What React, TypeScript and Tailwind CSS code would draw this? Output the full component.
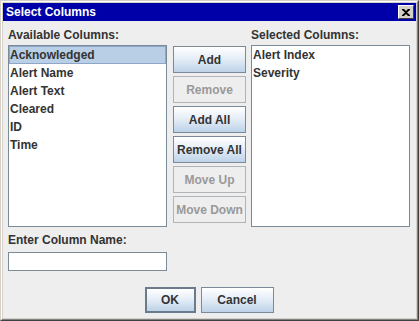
import React from "react";

function JButton({
  label,
  disabled,
  width,
  height,
  isDefault,
}: {
  label: string;
  disabled?: boolean;
  width: string;
  height: string;
  isDefault?: boolean;
}) {
  if (disabled) {
    return (
      <div
        className={`${width} ${height} flex items-center justify-center border border-[#b0b4b9] bg-[#eeeeee] text-[#999999] text-[12px] font-bold`}
      >
        {label}
      </div>
    );
  }
  return (
    <div
      className={`${width} ${height} flex items-center justify-center ${
        isDefault ? "border-2 border-[#6b7b8c]" : "border border-[#7a8a99]"
      } bg-gradient-to-b from-[#ffffff] via-[#e3ecf6] to-[#bdd2e8] text-[#333333] text-[12px] font-bold`}
    >
      {label}
    </div>
  );
}

function ListBox({ items, selected }: { items: string[]; selected?: number }) {
  return (
    <div className="h-[182px] w-[159px] border border-[#7a8a99] bg-white">
      {items.map((it, i) => (
        <div
          key={it}
          className={`h-[18px] leading-[16px] text-[12px] font-bold text-[#333333] ${
            i === selected
              ? "bg-[#b8cfe5] border border-[#8ea7c8] pl-0"
              : "border border-transparent pl-0"
          }`}
        >
          {it}
        </div>
      ))}
    </div>
  );
}

export default function App() {
  return (
    <div className="w-[419px] h-[321px] font-['Liberation_Sans',Arial,sans-serif] border border-t-[#d4d0c8] border-l-[#d4d0c8] border-r-[#404040] border-b-[#404040]">
      <div className="w-full h-full border border-t-white border-l-white border-r-[#808080] border-b-[#808080]">
        <div className="w-full h-full border border-[#d4d0c8] flex flex-col">
          {/* Title bar */}
          <div className="h-[18px] bg-[#0000a8] flex items-center justify-between pl-[3px] pr-[2px]">
            <span className="text-white text-[12px] font-bold leading-[18px]">
              Select Columns
            </span>
            <div className="w-[16px] h-[14px] bg-[#d4d0c8] border border-t-white border-l-white border-r-[#404040] border-b-[#404040] flex items-center justify-center">
              <svg width="8" height="7" viewBox="0 0 8 7">
                <path
                  d="M0 0h2l2 2 2-2h2v1L5 3.5 8 6v1H6L4 5 2 7H0V6l3-2.5L0 1z"
                  fill="#000"
                />
              </svg>
            </div>
          </div>
          {/* Content */}
          <div className="flex-1 bg-[#eeeeee] pt-[7px] pl-[5px] pr-[6px] flex flex-col">
            <div className="flex">
              <div className="w-[159px] flex flex-col">
                <div className="h-[15px] leading-[15px] text-[12px] font-bold text-[#333333]">
                  Available Columns:
                </div>
                <div className="mt-[2px]">
                  <ListBox
                    items={[
                      "Acknowledged",
                      "Alert Name",
                      "Alert Text",
                      "Cleared",
                      "ID",
                      "Time",
                    ]}
                    selected={0}
                  />
                </div>
              </div>
              <div className="ml-[6px] w-[73px] pt-[18px] flex flex-col gap-[3px]">
                <JButton label="Add" width="w-[73px]" height="h-[27px]" />
                <JButton label="Remove" disabled width="w-[73px]" height="h-[27px]" />
                <JButton label="Add All" width="w-[73px]" height="h-[27px]" />
                <JButton label="Remove All" width="w-[73px]" height="h-[27px]" />
                <JButton label="Move Up" disabled width="w-[73px]" height="h-[27px]" />
                <JButton label="Move Down" disabled width="w-[73px]" height="h-[27px]" />
              </div>
              <div className="ml-[5px] w-[159px] flex flex-col">
                <div className="h-[15px] leading-[15px] text-[12px] font-bold text-[#333333]">
                  Selected Columns:
                </div>
                <div className="mt-[2px]">
                  <ListBox items={["Alert Index", "Severity"]} />
                </div>
              </div>
            </div>
            <div className="mt-[6px] h-[15px] leading-[15px] text-[12px] font-bold text-[#333333]">
              Enter Column Name:
            </div>
            <div className="mt-[4px] w-[159px] h-[19px] border border-[#7a8a99] bg-white" />
            <div className="mt-[16px] flex justify-center gap-[5px]">
              <JButton label="OK" isDefault width="w-[51px]" height="h-[26px]" />
              <JButton label="Cancel" width="w-[73px]" height="h-[26px]" />
            </div>
          </div>
        </div>
      </div>
    </div>
  );
}
